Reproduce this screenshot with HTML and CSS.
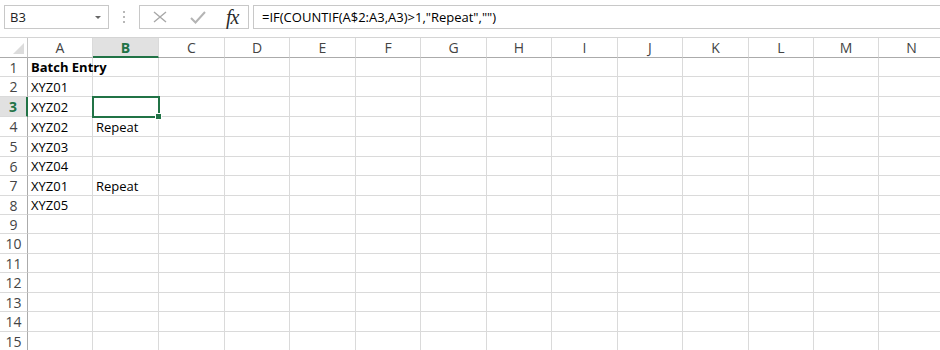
FILE: index.html
```html
<!DOCTYPE html>
<html lang="en">
<head>
  <meta charset="UTF-8">
  <title>Batch Entry</title>
  <link rel="stylesheet" href="styles.css">
</head>
<body>

  <div class="toolbar">
    <div class="name-box">
      <span>B3</span>
      <span class="drop"></span>
    </div>
    <div class="grip"><i></i><i></i><i></i></div>
    <div class="fx-box">
      <svg class="ico" width="14" height="12" viewBox="0 0 14 12">
        <path d="M1 1 L13 11 M13 1 L1 11" stroke="#a8a8a8" stroke-width="1.4" fill="none"/>
      </svg>
      <svg class="ico" width="16" height="14" viewBox="0 0 16 14">
        <path d="M1 8 L5.5 12.5 L15 2" stroke="#b4b4b4" stroke-width="2" fill="none"/>
      </svg>
      <span class="fx">fx</span>
    </div>
    <div class="formula">=IF(COUNTIF(A$2:A3,A3)&gt;1,"Repeat","")</div>
  </div>

  <div class="sheet">
    <div class="corner"><span></span></div>
    <div class="colhead">A</div><div class="colhead sel">B</div><div class="colhead">C</div><div class="colhead">D</div><div class="colhead">E</div><div class="colhead">F</div><div class="colhead">G</div><div class="colhead">H</div><div class="colhead">I</div><div class="colhead">J</div><div class="colhead">K</div><div class="colhead">L</div><div class="colhead">M</div><div class="colhead">N</div>

    <div class="rowhead">1</div><div class="cell bold">Batch Entry</div><div class="cell"></div><div class="cell"></div><div class="cell"></div><div class="cell"></div><div class="cell"></div><div class="cell"></div><div class="cell"></div><div class="cell"></div><div class="cell"></div><div class="cell"></div><div class="cell"></div><div class="cell"></div><div class="cell"></div>
    <div class="rowhead">2</div><div class="cell">XYZ01</div><div class="cell"></div><div class="cell"></div><div class="cell"></div><div class="cell"></div><div class="cell"></div><div class="cell"></div><div class="cell"></div><div class="cell"></div><div class="cell"></div><div class="cell"></div><div class="cell"></div><div class="cell"></div><div class="cell"></div>
    <div class="rowhead sel">3</div><div class="cell">XYZ02</div><div class="cell active"><span class="handle"></span></div><div class="cell"></div><div class="cell"></div><div class="cell"></div><div class="cell"></div><div class="cell"></div><div class="cell"></div><div class="cell"></div><div class="cell"></div><div class="cell"></div><div class="cell"></div><div class="cell"></div><div class="cell"></div>
    <div class="rowhead">4</div><div class="cell">XYZ02</div><div class="cell">Repeat</div><div class="cell"></div><div class="cell"></div><div class="cell"></div><div class="cell"></div><div class="cell"></div><div class="cell"></div><div class="cell"></div><div class="cell"></div><div class="cell"></div><div class="cell"></div><div class="cell"></div><div class="cell"></div>
    <div class="rowhead">5</div><div class="cell">XYZ03</div><div class="cell"></div><div class="cell"></div><div class="cell"></div><div class="cell"></div><div class="cell"></div><div class="cell"></div><div class="cell"></div><div class="cell"></div><div class="cell"></div><div class="cell"></div><div class="cell"></div><div class="cell"></div><div class="cell"></div>
    <div class="rowhead">6</div><div class="cell">XYZ04</div><div class="cell"></div><div class="cell"></div><div class="cell"></div><div class="cell"></div><div class="cell"></div><div class="cell"></div><div class="cell"></div><div class="cell"></div><div class="cell"></div><div class="cell"></div><div class="cell"></div><div class="cell"></div><div class="cell"></div>
    <div class="rowhead">7</div><div class="cell">XYZ01</div><div class="cell">Repeat</div><div class="cell"></div><div class="cell"></div><div class="cell"></div><div class="cell"></div><div class="cell"></div><div class="cell"></div><div class="cell"></div><div class="cell"></div><div class="cell"></div><div class="cell"></div><div class="cell"></div><div class="cell"></div>
    <div class="rowhead">8</div><div class="cell">XYZ05</div><div class="cell"></div><div class="cell"></div><div class="cell"></div><div class="cell"></div><div class="cell"></div><div class="cell"></div><div class="cell"></div><div class="cell"></div><div class="cell"></div><div class="cell"></div><div class="cell"></div><div class="cell"></div><div class="cell"></div>
    <div class="rowhead">9</div><div class="cell"></div><div class="cell"></div><div class="cell"></div><div class="cell"></div><div class="cell"></div><div class="cell"></div><div class="cell"></div><div class="cell"></div><div class="cell"></div><div class="cell"></div><div class="cell"></div><div class="cell"></div><div class="cell"></div><div class="cell"></div>
    <div class="rowhead">10</div><div class="cell"></div><div class="cell"></div><div class="cell"></div><div class="cell"></div><div class="cell"></div><div class="cell"></div><div class="cell"></div><div class="cell"></div><div class="cell"></div><div class="cell"></div><div class="cell"></div><div class="cell"></div><div class="cell"></div><div class="cell"></div>
    <div class="rowhead">11</div><div class="cell"></div><div class="cell"></div><div class="cell"></div><div class="cell"></div><div class="cell"></div><div class="cell"></div><div class="cell"></div><div class="cell"></div><div class="cell"></div><div class="cell"></div><div class="cell"></div><div class="cell"></div><div class="cell"></div><div class="cell"></div>
    <div class="rowhead">12</div><div class="cell"></div><div class="cell"></div><div class="cell"></div><div class="cell"></div><div class="cell"></div><div class="cell"></div><div class="cell"></div><div class="cell"></div><div class="cell"></div><div class="cell"></div><div class="cell"></div><div class="cell"></div><div class="cell"></div><div class="cell"></div>
    <div class="rowhead">13</div><div class="cell"></div><div class="cell"></div><div class="cell"></div><div class="cell"></div><div class="cell"></div><div class="cell"></div><div class="cell"></div><div class="cell"></div><div class="cell"></div><div class="cell"></div><div class="cell"></div><div class="cell"></div><div class="cell"></div><div class="cell"></div>
    <div class="rowhead">14</div><div class="cell"></div><div class="cell"></div><div class="cell"></div><div class="cell"></div><div class="cell"></div><div class="cell"></div><div class="cell"></div><div class="cell"></div><div class="cell"></div><div class="cell"></div><div class="cell"></div><div class="cell"></div><div class="cell"></div><div class="cell"></div>
    <div class="rowhead">15</div><div class="cell"></div><div class="cell"></div><div class="cell"></div><div class="cell"></div><div class="cell"></div><div class="cell"></div><div class="cell"></div><div class="cell"></div><div class="cell"></div><div class="cell"></div><div class="cell"></div><div class="cell"></div><div class="cell"></div><div class="cell"></div>
  </div>

</body>
</html>
```

FILE: styles.css
```css
/* excel-like sheet */
body {
  margin: 0;
  background: #fff;
  font-family: 'Open Sans', 'Noto Sans', sans-serif;
  font-size: 13px;
  color: #000;
  overflow: hidden;
}

.toolbar {
  display: flex;
  align-items: flex-start;
  height: 37px;
  padding: 5px 0 0 4px;
  box-sizing: border-box;
}

.name-box {
  width: 105px;
  height: 24px;
  box-sizing: border-box;
  border: 1px solid #c8c8c8;
  display: flex;
  align-items: center;
  justify-content: space-between;
  padding: 0 7px 0 5px;
  color: #222;
}

.drop {
  width: 0;
  height: 0;
  border-left: 3px solid transparent;
  border-right: 3px solid transparent;
  border-top: 3px solid #666;
}

.grip {
  width: 30px;
  height: 24px;
  display: flex;
  flex-direction: column;
  align-items: center;
  justify-content: center;
  gap: 3px;
}

.grip i {
  width: 2px;
  height: 2px;
  background: #b8b8b8;
}

.fx-box {
  width: 110px;
  height: 24px;
  box-sizing: border-box;
  border: 1px solid #c8c8c8;
  display: flex;
  align-items: center;
  padding: 0 0 0 13px;
  gap: 23px;
}

.fx {
  font-family: 'Liberation Serif', serif;
  font-style: italic;
  font-size: 20px;
  color: #2a2a2a;
  margin-left: -3px;
  letter-spacing: -1px;
}

.formula {
  flex: 1;
  min-width: 0;
  height: 24px;
  margin-left: 4px;
  box-sizing: border-box;
  border: 1px solid #c8c8c8;
  border-right: none;
  padding: 0 0 0 8px;
  line-height: 22px;
  white-space: nowrap;
}

.sheet {
  display: grid;
  grid-template-columns: 28px 65px 66px 66px 65px 66px 65px 66px 65px 66px 65px 66px 65px 65px 66px;
  grid-template-rows: 20px 19px 20px 20px 20px 20px 19px 20px 19px 19px 20px 19px 20px 19px 20px 19px;
  border-top: 1px solid #d4d4d4;
  overflow: hidden;
}

.corner {
  position: relative;
  border-right: 1px solid #c6c6c6;
  border-bottom: 1px solid #ababab;
}

.corner span {
  position: absolute;
  right: 3px;
  bottom: 3px;
  width: 0;
  height: 0;
  border-left: 11px solid transparent;
  border-bottom: 11px solid #dcdcdc;
}

.colhead {
  border-right: 1px solid #dadada;
  border-bottom: 1px solid #ababab;
  text-align: center;
  font-size: 14px;
  line-height: 19px;
  color: #444;
}

.colhead.sel {
  background: #e1e1e1;
  border-bottom: 2px solid #217346;
  color: #217346;
  font-weight: bold;
}

.rowhead {
  border-right: 1px solid #ababab;
  border-bottom: 1px solid #dadada;
  text-align: center;
  font-size: 14px;
  line-height: 19px;
  color: #444;
}

.rowhead.sel {
  background: #e1e1e1;
  border-right: 2px solid #217346;
  color: #217346;
  font-weight: bold;
}

.cell {
  position: relative;
  border-right: 1px solid #dadada;
  border-bottom: 1px solid #dadada;
  display: flex;
  align-items: flex-end;
  padding-left: 3px;
  line-height: 17px;
  white-space: nowrap;
}

.cell.bold {
  font-weight: bold;
}

.cell.active {
  outline: 2px solid #217346;
  outline-offset: -1px;
  z-index: 2;
}

.handle {
  position: absolute;
  right: -4px;
  bottom: -4px;
  width: 5px;
  height: 5px;
  background: #217346;
  border: 1px solid #fff;
}
```
